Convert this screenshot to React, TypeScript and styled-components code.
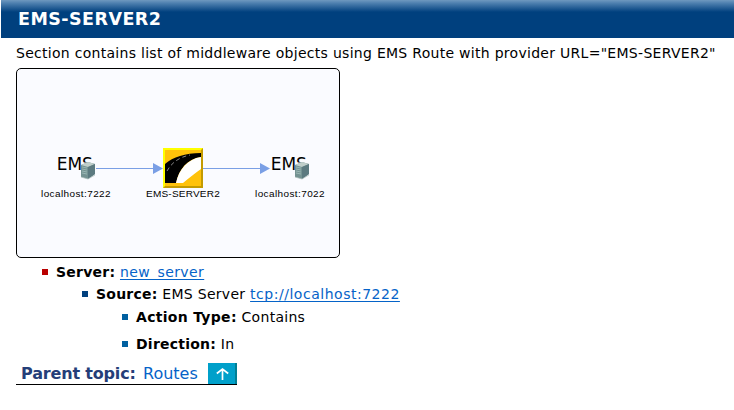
import React from "react";
import styled, { createGlobalStyle } from "styled-components";

const Global = createGlobalStyle`
  body {
    margin: 0;
    background: #fff;
    color: #000;
    font: 14px/22px "DejaVu Sans", Verdana, sans-serif;
    letter-spacing: 0.285px;
  }
`;

const Header = styled.h1`
  box-sizing: border-box;
  height: 38px;
  margin: 0 0 0 1px;
  padding-left: 17px;
  color: #fff;
  font-size: 17.5px;
  font-weight: 700;
  line-height: 38px;
  letter-spacing: 0.45px;
  background: linear-gradient(#6f99bf 0, #4f81b0 3px, #00407e 12px);
`;

const Content = styled.main`
  padding: 4px 16px 0;
`;

const Intro = styled.p`
  margin: 0 0 4px;
  white-space: nowrap;
`;

const Diagram = styled.figure`
  box-sizing: border-box;
  width: 324px;
  height: 190px;
  margin: 0 0 3px;
  border: 1px solid #000;
  border-radius: 5px;
  background: #fafbff;
  overflow: hidden;

  svg {
    display: block;
  }
`;

const List = styled.ul<{ $top?: number }>`
  margin: 0;
  padding: ${(p) => p.$top ?? 0}px 0 0 40px;
  list-style: none;
`;

const Item = styled.li<{ $marker: string; $gap?: number }>`
  margin-bottom: ${(p) => p.$gap ?? 0}px;

  &::before {
    content: "";
    float: left;
    width: 6px;
    height: 6px;
    margin: 8px 0 0 -14px;
    background: ${(p) => p.$marker};
  }
`;

const Term = styled.strong<{ $spacing?: number }>`
  letter-spacing: ${(p) => p.$spacing ?? 0.23}px;
`;

const Link = styled.a<{ $spacing: number }>`
  color: #0563c8;
  letter-spacing: ${(p) => p.$spacing}px;
  text-decoration: underline;
  text-underline-offset: 2px;
  text-decoration-skip-ink: none;
`;

const Parent = styled.nav`
  display: flex;
  box-sizing: border-box;
  width: 221px;
  height: 22px;
  margin-top: 8px;
  padding-left: 5px;
  border-bottom: 1px solid #000;
  color: #253e78;
  font-size: 16px;
  line-height: 22px;
`;

const ParentLabel = styled.strong`
  width: 122px;
  letter-spacing: -0.17px;
`;

const ParentLink = styled.a`
  width: 65px;
  color: #0563c8;
  letter-spacing: 0;
`;

const UpButton = styled.a`
  display: flex;
  box-sizing: border-box;
  width: 29px;
  height: 21px;
  border-right: 2px solid #007f94;
  background: #00a0ca;
`;

function ServerNode({ x, label }: { x: number; label: string }) {
  return (
    <g transform={`translate(${x} 0)`}>
      <text x="15.8" y="101" fontFamily="DejaVu Sans, sans-serif" fontSize="17" textLength="36" letterSpacing="0">
        EMS
      </text>
      <path d="M40.5 93.5h14v16h-14z" fill="#fafbff" />
      <path d="M40 96l7-3 7 2v10l-7 5-7-2z" fill="#749292" />
      <path d="M40 96l7-3 7 2-7 3z" fill="#bfceca" />
      <path d="M47 98l7-3v10l-7 5z" fill="#5c7a80" />
      <path d="M41 98l5 1M41 100l5 1M41 102l5 1M41 104l5 1" stroke="#a9c6c1" strokeWidth=".7" />
      <path d="M40 108l7 2 7-4" fill="none" stroke="#aabbb9" strokeWidth=".7" />
      <text x="0" y="128" fontFamily="Liberation Sans, sans-serif" fontSize="9.5" textLength="70" lengthAdjust="spacingAndGlyphs" letterSpacing=".4">
        {label}
      </text>
    </g>
  );
}

function RouteNode() {
  return (
    <g>
      <path d="M146 79h40v40h-40z" fill="#c49b00" />
      <path d="M146 79h40l-2 2h-36v36l-2 2z" fill="#ffff00" />
      <path d="M148 81h36v36h-36z" fill="#ffc20a" />
      <path d="M148 114V95c8-7 20-11 36-11v4c-14 2-22 12-25 26z" fill="#000" />
      <path d="M159 114c3-14 12-24 25-26v12c-6 4-12 9-18 14z" fill="#fff" />
      <path d="M150 102c5-9 13-14 23-16" fill="none" stroke="#a8a8a8" strokeWidth=".8" strokeDasharray="4 3" />
      <text x="129" y="128" fontFamily="Liberation Sans, sans-serif" fontSize="9.5" textLength="74" lengthAdjust="spacingAndGlyphs" letterSpacing=".2">
        EMS-SERVER2
      </text>
    </g>
  );
}

export default function App() {
  return (
    <>
      <Global />
      <Header>EMS-SERVER2</Header>
      <Content>
        <Intro>Section contains list of middleware objects using EMS Route with provider URL="EMS-SERVER2"</Intro>
        <Diagram>
          <svg width="322" height="188" viewBox="0 0 322 188">
            <path d="M79 99.5h58M186 99.5h58" stroke="#7a9fe5" />
            <path d="M136 94l10 5.5-10 5.5zM243 94l10 5.5-10 5.5z" fill="#7a9fe5" />
            <ServerNode x={24} label="localhost:7222" />
            <RouteNode />
            <ServerNode x={238} label="localhost:7022" />
          </svg>
        </Diagram>
        <List>
          <Item $marker="#b90000">
            <Term>Server:</Term> <Link href="#server" $spacing={0.4}>new_server</Link>
            <List>
              <Item $marker="#00407e">
                <Term>Source:</Term> EMS Server{" "}
                <Link href="#source" $spacing={0.52}>tcp://localhost:7222</Link>
                <List $top={1}>
                  <Item $marker="#0060a0" $gap={5}>
                    <Term $spacing={0.3}>Action Type:</Term> Contains
                  </Item>
                  <Item $marker="#0060a0">
                    <Term>Direction:</Term> In
                  </Item>
                </List>
              </Item>
            </List>
          </Item>
        </List>
        <Parent>
          <ParentLabel>Parent topic:</ParentLabel>
          <ParentLink>Routes</ParentLink>
          <UpButton aria-label="Up">
            <svg width="27" height="21" fill="none" stroke="#fff" strokeWidth="1.7">
              <path d="M14.5 17V6M8.8 10.5l5.7-4.5 5.7 4.5" />
            </svg>
          </UpButton>
        </Parent>
      </Content>
    </>
  );
}
